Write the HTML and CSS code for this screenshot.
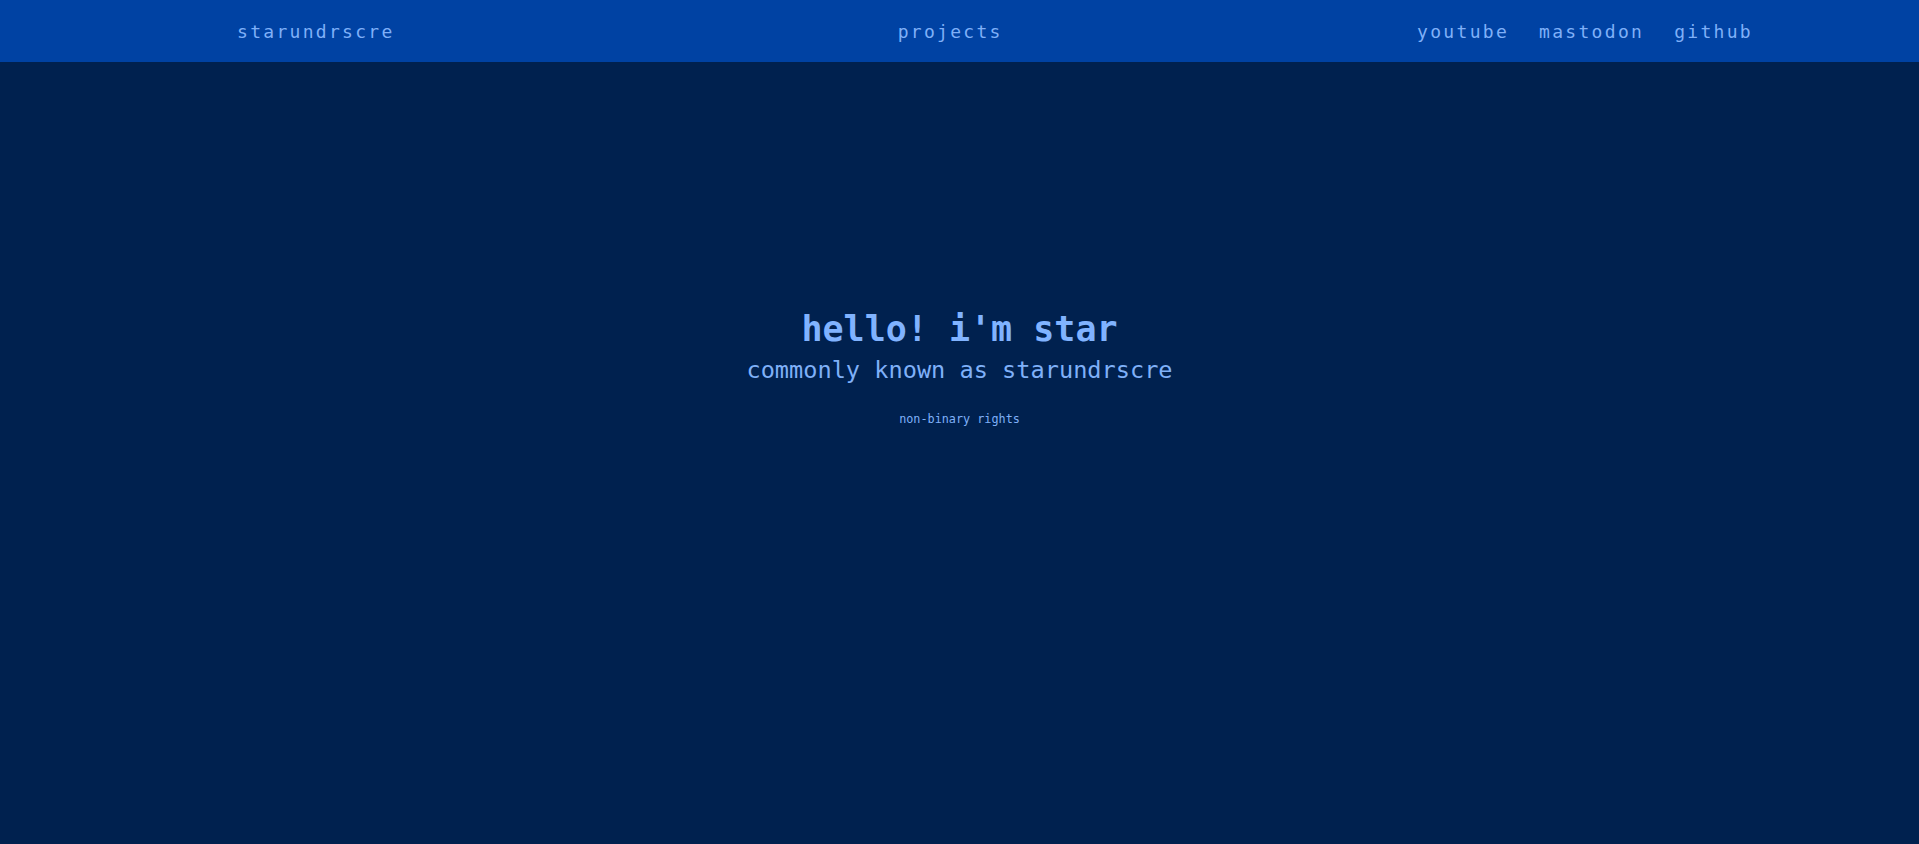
FILE: index.html
```html
<!DOCTYPE html>
<html>
<head>
<meta charset="utf-8">
<link rel="stylesheet" href="styles.css">
</head>
<body>
<nav class="nav">
  <a class="nav-link brand" href="#">starundrscre</a>
  <a class="nav-link middle" href="#">projects</a>
  <div class="nav-right">
    <a class="nav-link" href="#">youtube</a>
    <a class="nav-link" href="#">mastodon</a>
    <a class="nav-link" href="#">github</a>
  </div>
</nav>
<main class="hero">
  <h1 class="title">hello! i'm star</h1>
  <p class="subtitle">commonly known as starundrscre</p>
  <p class="tag">non-binary rights</p>
</main>
</body>
</html>
```
FILE: styles.css
```css
html, body {
  margin: 0;
  padding: 0;
  height: 100%;
}
body {
  background: #00214f;
  color: #7fb0f8;
  font-family: "DejaVu Sans Mono", "Liberation Mono", monospace;
}
.nav {
  height: 62px;
  background: #0042a3;
  display: flex;
  align-items: center;
  padding: 0 166px 0 237px;
  box-sizing: border-box;
}
.nav-link {
  color: #7fb0f8;
  text-decoration: none;
  font-size: 18px;
  letter-spacing: 2.3px;
  line-height: 22px;
  padding-top: 2px;
}
.middle {
  margin-left: 503px;
}
.nav-right {
  margin-left: auto;
  display: flex;
  gap: 30px;
}
.hero {
  display: flex;
  flex-direction: column;
  align-items: center;
  padding-top: 244px;
}
.title {
  margin: 0;
  font-size: 35px;
  line-height: 47px;
  font-weight: bold;
  color: #80b3ff;
}
.subtitle {
  margin: 0;
  font-size: 23.6px;
  line-height: 34px;
}
.tag {
  margin: 24px 0 0;
  font-size: 11.8px;
  line-height: 16px;
}
```
